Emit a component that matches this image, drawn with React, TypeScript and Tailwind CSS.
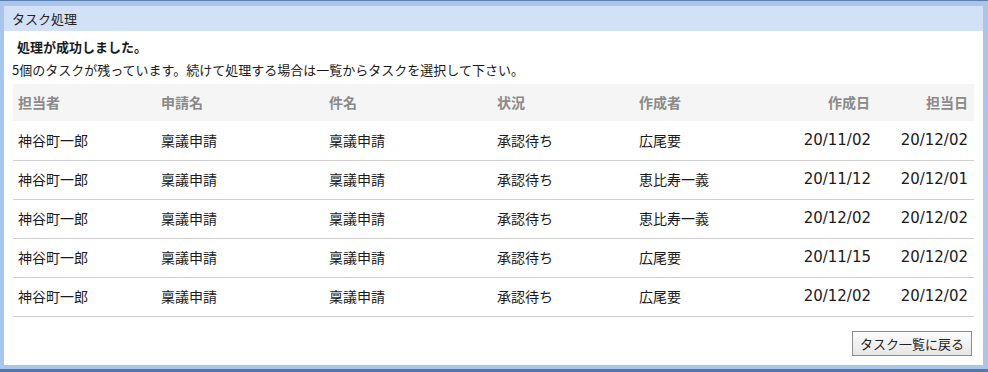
const rows = [
  { owner: '神谷町一郎', app: '稟議申請', subject: '稟議申請', status: '承認待ち', author: '広尾要', created: '20/11/02', due: '20/12/02' },
  { owner: '神谷町一郎', app: '稟議申請', subject: '稟議申請', status: '承認待ち', author: '恵比寿一義', created: '20/11/12', due: '20/12/01' },
  { owner: '神谷町一郎', app: '稟議申請', subject: '稟議申請', status: '承認待ち', author: '恵比寿一義', created: '20/12/02', due: '20/12/02' },
  { owner: '神谷町一郎', app: '稟議申請', subject: '稟議申請', status: '承認待ち', author: '広尾要', created: '20/11/15', due: '20/12/02' },
  { owner: '神谷町一郎', app: '稟議申請', subject: '稟議申請', status: '承認待ち', author: '広尾要', created: '20/12/02', due: '20/12/02' },
]

const font = "font-['Noto_Sans_CJK_JP',sans-serif]"
const dateFont = "font-['DejaVu_Sans','Noto_Sans_CJK_JP',sans-serif] text-[15px]"

export default function App() {
  return (
    <div className={`w-[988px] h-[372px] bg-[#a9c5ec] border-t border-t-[#5d7fae] border-b-[3px] border-b-[#4f77b0] pt-[5px] pl-[4px] pr-[5px] pb-[4px] ${font} text-[#1a1a1a]`}>
      <div className="h-full bg-white flex flex-col">
        {/* panel title bar */}
        <div className="h-[25px] bg-[#d3e1f7] flex items-center px-[8px] text-[13px] text-[#222]">
          タスク処理
        </div>

        <div className="flex-1 flex flex-col pl-[8px] pr-[9px]">
          <div className="mt-[6px] ml-[5px] text-[13px] font-bold leading-[20px]">処理が成功しました。</div>
          <div className="mt-[3px] text-[13px] leading-[20px]">
            5個のタスクが残っています。続けて処理する場合は一覧からタスクを選択して下さい。
          </div>

          <table className="mt-[4px] ml-[1px] w-[961px] table-fixed border-collapse text-[14px]">
            <colgroup>
              <col className="w-[143px]" />
              <col className="w-[168px]" />
              <col className="w-[168px]" />
              <col className="w-[142px]" />
              <col className="w-[123px]" />
              <col className="w-[114px]" />
              <col className="w-[103px]" />
            </colgroup>
            <thead>
              <tr className="h-[37px] bg-[#f5f5f5] text-[#8a8a8a] font-bold">
                <th className="text-left pl-[5px] font-bold">担当者</th>
                <th className="text-left pl-[5px] font-bold">申請名</th>
                <th className="text-left pl-[5px] font-bold">件名</th>
                <th className="text-left pl-[5px] font-bold">状況</th>
                <th className="text-left pl-[5px] font-bold">作成者</th>
                <th className="text-right pr-[1px] font-bold">作成日</th>
                <th className="text-right pr-[6px] font-bold">担当日</th>
              </tr>
            </thead>
            <tbody>
              {rows.map((r, i) => (
                <tr key={i} className="h-[39px] border-b border-[#cfcfcf]">
                  <td className="pl-[5px]">{r.owner}</td>
                  <td className="pl-[5px]">{r.app}</td>
                  <td className="pl-[5px]">{r.subject}</td>
                  <td className="pl-[5px]">{r.status}</td>
                  <td className="pl-[5px]">{r.author}</td>
                  <td className={`text-right pr-[0px] ${dateFont}`}>{r.created}</td>
                  <td className={`text-right pr-[6px] ${dateFont}`}>{r.due}</td>
                </tr>
              ))}
            </tbody>
          </table>

          <div className="flex justify-end mt-[14px] pr-[2px]">
            <button className="h-[25px] px-[7px] border border-[#8c8c8c] bg-gradient-to-b from-[#fdfdfd] to-[#e6e6e6] text-[13px] text-[#222] leading-none">
              タスク一覧に戻る
            </button>
          </div>
        </div>
      </div>
    </div>
  )
}
